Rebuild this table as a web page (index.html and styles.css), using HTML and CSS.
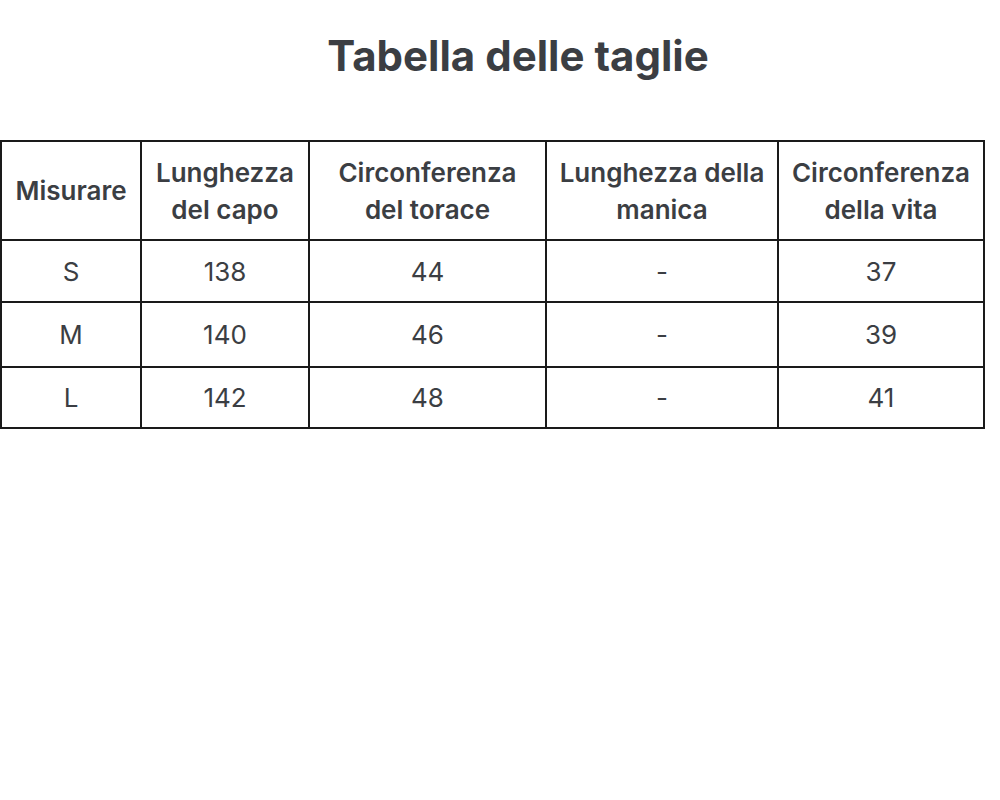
FILE: index.html
```html
<!DOCTYPE html>
<html lang="it">
<head>
<meta charset="utf-8">
<title>Tabella delle taglie</title>
<link rel="stylesheet" href="styles.css">
</head>
<body>
<main class="page">
  <h1 class="title">Tabella delle taglie</h1>
  <table class="sizes">
    <colgroup>
      <col class="c1"><col class="c2"><col class="c3"><col class="c4"><col class="c5">
    </colgroup>
    <thead>
      <tr>
        <th>Misurare</th>
        <th>Lunghezza<br>del capo</th>
        <th>Circonferenza<br>del torace</th>
        <th>Lunghezza della<br>manica</th>
        <th>Circonferenza<br>della vita</th>
      </tr>
    </thead>
    <tbody>
      <tr class="r1"><td>S</td><td>138</td><td>44</td><td>-</td><td>37</td></tr>
      <tr class="r2"><td>M</td><td>140</td><td>46</td><td>-</td><td>39</td></tr>
      <tr class="r3"><td>L</td><td>142</td><td>48</td><td>-</td><td>41</td></tr>
    </tbody>
  </table>
</main>
</body>
</html>
```

FILE: styles.css
```css
html, body {
  margin: 0;
  padding: 0;
  background: #ffffff;
}

.page {
  width: 1000px;
  height: 800px;
  padding-top: 30px;
  box-sizing: border-box;
  font-family: Inter, "Open Sans", sans-serif;
  color: #3b3e43;
}

.title {
  margin: 0 0 58px 0;
  padding-left: 36px;
  text-align: center;
  font-size: 42px;
  line-height: 52px;
  font-weight: 700;
  letter-spacing: 0;
}

.sizes {
  margin-left: 0;
  width: 983px;
  border-collapse: collapse;
  table-layout: fixed;
}

.c1 { width: 140px; }
.c2 { width: 168px; }
.c3 { width: 237px; }
.c4 { width: 232px; }
.c5 { width: 206px; }

.sizes th,
.sizes td {
  border: 2px solid #1a1a1a;
  text-align: center;
  vertical-align: middle;
  padding: 0;
}

.sizes th {
  height: 97px;
  font-size: 26px;
  line-height: 37px;
  font-weight: 600;
}

.sizes td {
  height: 60px;
  font-size: 26px;
  font-weight: 400;
}

.sizes .r2 td { height: 63px; }
.sizes .r3 td { height: 59px; }
```
